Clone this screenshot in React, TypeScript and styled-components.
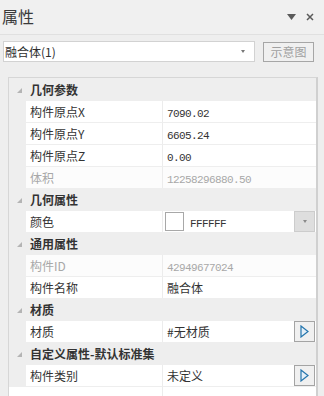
import React from 'react';
import styled, { createGlobalStyle } from 'styled-components';

const GlobalStyle = createGlobalStyle`
  html,
  body {
    margin: 0;
    padding: 0;
    background: #eeeeee;
  }
`;

const cjk = `"Noto Sans CJK SC", "Liberation Sans", sans-serif`;
const mono = `"Liberation Mono", "Noto Sans CJK SC", monospace`;

const Panel = styled.div`
  width: 324px;
  height: 396px;
  overflow: hidden;
  background: #eeeeee;
  font-family: ${cjk};
  color: #333333;
  display: flex;
  flex-direction: column;
`;

const TitleBar = styled.div`
  height: 34px;
  display: flex;
  align-items: center;
  justify-content: space-between;
  padding: 0 10px 0 2px;
  background: #f0f0f0;
  border-bottom: 1px solid #e0e0e0;
`;

const Title = styled.div`
  font-size: 16px;
  line-height: 20px;
  color: #3a3a3a;
  margin-top: -2px;
`;

const TitleActions = styled.div`
  display: flex;
  align-items: center;
  gap: 10px;
  color: #5a5a5a;
`;

const Toolbar = styled.div`
  display: flex;
  align-items: center;
  padding: 6px 0 0 3px;
  height: 36px;
  align-items: flex-start;
`;

const Combo = styled.div`
  width: 249px;
  height: 19px;
  background: #ffffff;
  border: 1px solid #d2d2d2;
  display: flex;
  align-items: center;
  justify-content: space-between;
  padding-left: 1px;
  font-size: 12px;
  color: #2e2e2e;
`;

const ComboArrow = styled.span`
  width: 0;
  height: 0;
  margin-right: 9px;
  border-left: 2.5px solid transparent;
  border-right: 2.5px solid transparent;
  border-top: 3px solid #777777;
`;

const SchemeButton = styled.button`
  margin: 1px 0 0 8px;
  width: 51px;
  height: 20px;
  padding: 0;
  border: 1px solid #a6a6a6;
  background: #f0f0f0;
  color: #a0a0a0;
  font-family: ${cjk};
  font-size: 12px;
  line-height: 16px;
`;

const Grid = styled.div`
  margin-left: 8px;
  width: 307px;
  flex: 1;
  border: 1px solid #d6d6d6;
  border-bottom: none;
  border-right: 2px solid #d0d0d0;
  background: #ffffff;
  display: flex;
  flex-direction: column;
`;

const CategoryRow = styled.div`
  height: 22px;
  display: flex;
  align-items: center;
  background: #eeeeee;
`;

const Expander = styled.span`
  width: 0;
  height: 0;
  margin: 2px 8px 0 8px;
  border-left: 5px solid transparent;
  border-bottom: 5px solid #b4b4b4;
`;

const CategoryLabel = styled.span`
  font-size: 12px;
  font-weight: 700;
  color: #333333;
  white-space: nowrap;
`;

const PropRow = styled.div`
  height: 21px;
  display: grid;
  grid-template-columns: 17px 136px 1px 1fr;
  border-top: 1px solid #eeeeee;
  background: #ffffff;
`;

const Gutter = styled.div`
  background: #eeeeee;
`;

const Divider = styled.div`
  background: #ececec;
`;

const NameCell = styled.div<{ $disabled?: boolean }>`
  display: flex;
  align-items: center;
  padding-left: 4px;
  font-size: 12px;
  color: ${({ $disabled }) => ($disabled ? '#a8a8a8' : '#333333')};
  background: ${({ $disabled }) => ($disabled ? '#fcfcfc' : '#ffffff')};
`;

const ValueCell = styled.div<{ $disabled?: boolean }>`
  display: flex;
  align-items: center;
  padding: 0 1px 0 4px;
  font-size: 12px;
  color: ${({ $disabled }) => ($disabled ? '#a8a8a8' : '#333333')};
  background: ${({ $disabled }) => ($disabled ? '#fcfcfc' : '#ffffff')};
`;

const Mono = styled.span`
  font-family: ${mono};
  font-size: 11px;
  letter-spacing: -0.6px;
`;

const Text = styled.span`
  flex: 1;
  white-space: nowrap;
`;

const Swatch = styled.span`
  width: 17px;
  height: 17px;
  margin: 0 6px 0 -2px;
  border: 1px solid #a8a8a8;
  background: #ffffff;
`;

const SideButton = styled.span<{ $kind: 'drop' | 'more' }>`
  width: 19px;
  height: 19px;
  display: flex;
  align-items: center;
  justify-content: center;
  border: 1px solid ${({ $kind }) => ($kind === 'drop' ? '#cccccc' : '#a4a4a4')};
  background: ${({ $kind }) => ($kind === 'drop' ? '#dedede' : '#f0f0f0')};
`;

const DropArrow = styled.span`
  width: 0;
  height: 0;
  border-left: 2.5px solid transparent;
  border-right: 2.5px solid transparent;
  border-top: 3px solid #8a8a8a;
`;

const EmptyRow = styled(PropRow)`
  flex: 1;
  grid-template-columns: 153px 1px 1fr;
`;

type Prop = {
  name: string;
  value?: string;
  mono?: boolean;
  disabled?: boolean;
  kind?: 'color' | 'more';
};

type Category = {
  title: string;
  props: Prop[];
};

const categories: Category[] = [
  {
    title: '几何参数',
    props: [
      { name: '构件原点X', value: '7090.02', mono: true },
      { name: '构件原点Y', value: '6605.24', mono: true },
      { name: '构件原点Z', value: '0.00', mono: true },
      { name: '体积', value: '12258296880.50', mono: true, disabled: true },
    ],
  },
  {
    title: '几何属性',
    props: [{ name: '颜色', value: 'FFFFFF', mono: true, kind: 'color' }],
  },
  {
    title: '通用属性',
    props: [
      { name: '构件ID', value: '42949677024', mono: true, disabled: true },
      { name: '构件名称', value: '融合体' },
    ],
  },
  {
    title: '材质',
    props: [{ name: '材质', value: '#无材质', kind: 'more' }],
  },
  {
    title: '自定义属性-默认标准集',
    props: [{ name: '构件类别', value: '未定义', kind: 'more' }],
  },
];

const PlayIcon = () => (
  <svg width="9" height="13" viewBox="0 0 9 13">
    <polygon points="1,1 8,6.5 1,12" fill="#e4eff8" stroke="#2475ad" strokeWidth="1.2" />
  </svg>
);

const PropertyRow: React.FC<{ prop: Prop }> = ({ prop }) => (
  <PropRow>
    <Gutter />
    <NameCell $disabled={prop.disabled}>{prop.name}</NameCell>
    <Divider />
    <ValueCell $disabled={prop.disabled}>
      {prop.kind === 'color' && <Swatch />}
      <Text>{prop.mono ? <Mono>{prop.value}</Mono> : prop.value}</Text>
      {prop.kind === 'color' && (
        <SideButton $kind="drop">
          <DropArrow />
        </SideButton>
      )}
      {prop.kind === 'more' && (
        <SideButton $kind="more">
          <PlayIcon />
        </SideButton>
      )}
    </ValueCell>
  </PropRow>
);

const App: React.FC = () => (
  <Panel>
    <GlobalStyle />
    <TitleBar>
      <Title>属性</Title>
      <TitleActions>
        <svg width="9" height="6" viewBox="0 0 9 6">
          <polygon points="0,0 9,0 4.5,6" fill="#5a5a5a" />
        </svg>
        <svg width="8" height="8" viewBox="0 0 8 8">
          <path d="M1 1 L7 7 M7 1 L1 7" stroke="#5a5a5a" strokeWidth="1.5" />
        </svg>
      </TitleActions>
    </TitleBar>
    <Toolbar>
      <Combo>
        <span>融合体(1)</span>
        <ComboArrow />
      </Combo>
      <SchemeButton>示意图</SchemeButton>
    </Toolbar>
    <Grid>
      {categories.map(({ title, props }) => (
        <React.Fragment key={title}>
          <CategoryRow>
            <Expander />
            <CategoryLabel>{title}</CategoryLabel>
          </CategoryRow>
          {props.map((p) => (
            <PropertyRow key={p.name} prop={p} />
          ))}
        </React.Fragment>
      ))}
      <EmptyRow>
        <div />
        <Divider />
        <div />
      </EmptyRow>
    </Grid>
  </Panel>
);

export default App;
